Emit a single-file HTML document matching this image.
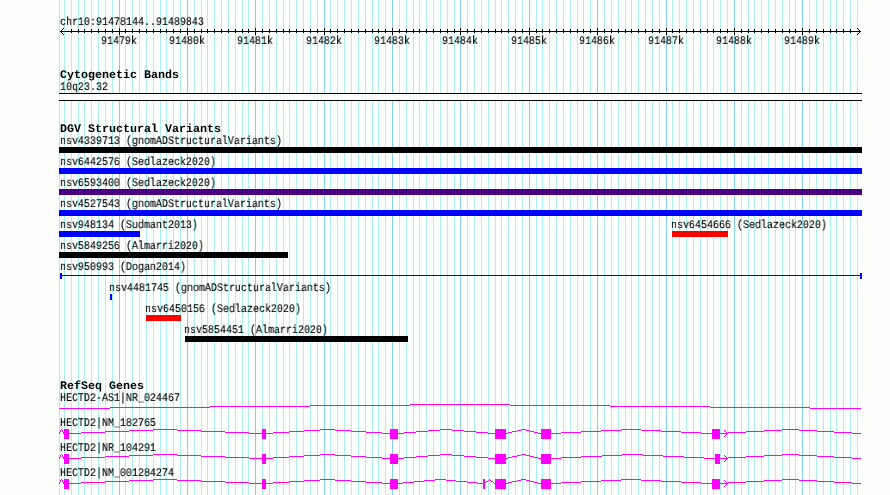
<!DOCTYPE html><html><head><meta charset="utf-8"><style>
html,body{margin:0;padding:0;}
body{width:890px;height:495px;overflow:hidden;background:#fcfefc;position:relative;}
svg{position:absolute;left:0;top:0;}
.t{position:absolute;white-space:pre;font-family:"Liberation Mono",monospace;color:#000;transform-origin:0 0;line-height:1;text-rendering:geometricPrecision;will-change:transform;}
.s{font-size:11.6px;transform:scaleX(0.8620);font-weight:normal;-webkit-text-stroke:0.12px #000;}
.b{font-size:11.6px;transform:scaleX(1.0060);font-weight:bold;}
</style></head><body>
<svg width="890" height="495" viewBox="0 0 890 495" shape-rendering="crispEdges">
<path fill="#afeeee" d="M59 0h1v495h-1zM64 0h1v495h-1zM71 0h1v495h-1zM78 0h1v495h-1zM84 0h1v495h-1zM91 0h1v495h-1zM98 0h1v495h-1zM105 0h1v495h-1zM112 0h1v495h-1z"/>
<path fill="#87ceeb" d="M119 0h1v495h-1z"/>
<path fill="#afeeee" d="M125 0h1v495h-1zM132 0h1v495h-1zM139 0h1v495h-1zM146 0h1v495h-1zM153 0h1v495h-1zM160 0h1v495h-1zM166 0h1v495h-1zM173 0h1v495h-1zM180 0h1v495h-1z"/>
<path fill="#87ceeb" d="M187 0h1v495h-1z"/>
<path fill="#afeeee" d="M194 0h1v495h-1zM201 0h1v495h-1zM207 0h1v495h-1zM214 0h1v495h-1zM221 0h1v495h-1zM228 0h1v495h-1zM235 0h1v495h-1zM242 0h1v495h-1zM248 0h1v495h-1z"/>
<path fill="#87ceeb" d="M255 0h1v495h-1z"/>
<path fill="#afeeee" d="M262 0h1v495h-1zM269 0h1v495h-1zM276 0h1v495h-1zM283 0h1v495h-1zM289 0h1v495h-1zM296 0h1v495h-1zM303 0h1v495h-1zM310 0h1v495h-1zM317 0h1v495h-1z"/>
<path fill="#87ceeb" d="M324 0h1v495h-1z"/>
<path fill="#afeeee" d="M330 0h1v495h-1zM337 0h1v495h-1zM344 0h1v495h-1zM351 0h1v495h-1zM358 0h1v495h-1zM365 0h1v495h-1zM372 0h1v495h-1zM378 0h1v495h-1zM385 0h1v495h-1z"/>
<path fill="#87ceeb" d="M392 0h1v495h-1z"/>
<path fill="#afeeee" d="M399 0h1v495h-1zM406 0h1v495h-1zM413 0h1v495h-1zM419 0h1v495h-1zM426 0h1v495h-1zM433 0h1v495h-1zM440 0h1v495h-1zM447 0h1v495h-1zM454 0h1v495h-1z"/>
<path fill="#87ceeb" d="M460 0h1v495h-1z"/>
<path fill="#afeeee" d="M467 0h1v495h-1zM474 0h1v495h-1zM481 0h1v495h-1zM488 0h1v495h-1zM495 0h1v495h-1zM501 0h1v495h-1zM508 0h1v495h-1zM515 0h1v495h-1zM522 0h1v495h-1z"/>
<path fill="#87ceeb" d="M529 0h1v495h-1z"/>
<path fill="#afeeee" d="M536 0h1v495h-1zM542 0h1v495h-1zM549 0h1v495h-1zM556 0h1v495h-1zM563 0h1v495h-1zM570 0h1v495h-1zM577 0h1v495h-1zM583 0h1v495h-1zM590 0h1v495h-1z"/>
<path fill="#87ceeb" d="M597 0h1v495h-1z"/>
<path fill="#afeeee" d="M604 0h1v495h-1zM611 0h1v495h-1zM618 0h1v495h-1zM625 0h1v495h-1zM631 0h1v495h-1zM638 0h1v495h-1zM645 0h1v495h-1zM652 0h1v495h-1zM659 0h1v495h-1z"/>
<path fill="#87ceeb" d="M666 0h1v495h-1z"/>
<path fill="#afeeee" d="M672 0h1v495h-1zM679 0h1v495h-1zM686 0h1v495h-1zM693 0h1v495h-1zM700 0h1v495h-1zM707 0h1v495h-1zM713 0h1v495h-1zM720 0h1v495h-1zM727 0h1v495h-1z"/>
<path fill="#87ceeb" d="M734 0h1v495h-1z"/>
<path fill="#afeeee" d="M741 0h1v495h-1zM748 0h1v495h-1zM754 0h1v495h-1zM761 0h1v495h-1zM768 0h1v495h-1zM775 0h1v495h-1zM782 0h1v495h-1zM789 0h1v495h-1zM795 0h1v495h-1z"/>
<path fill="#87ceeb" d="M802 0h1v495h-1z"/>
<path fill="#afeeee" d="M809 0h1v495h-1zM816 0h1v495h-1zM823 0h1v495h-1zM830 0h1v495h-1zM836 0h1v495h-1zM843 0h1v495h-1zM850 0h1v495h-1zM857 0h1v495h-1z"/>
<path fill="#fcfefc" d="M59 94h803v6h-803z"/>
<path fill="#000" d="M60 31h801v1h-801zM71 29h1v4h-1zM78 29h1v4h-1zM84 29h1v4h-1zM91 29h1v4h-1zM98 29h1v4h-1zM105 29h1v4h-1zM112 29h1v4h-1zM119 28h1v7h-1zM125 29h1v4h-1zM132 29h1v4h-1zM139 29h1v4h-1zM146 29h1v4h-1zM153 29h1v4h-1zM160 29h1v4h-1zM166 29h1v4h-1zM173 29h1v4h-1zM180 29h1v4h-1zM187 28h1v7h-1zM194 29h1v4h-1zM201 29h1v4h-1zM207 29h1v4h-1zM214 29h1v4h-1zM221 29h1v4h-1zM228 29h1v4h-1zM235 29h1v4h-1zM242 29h1v4h-1zM248 29h1v4h-1zM255 28h1v7h-1zM262 29h1v4h-1zM269 29h1v4h-1zM276 29h1v4h-1zM283 29h1v4h-1zM289 29h1v4h-1zM296 29h1v4h-1zM303 29h1v4h-1zM310 29h1v4h-1zM317 29h1v4h-1zM324 28h1v7h-1zM330 29h1v4h-1zM337 29h1v4h-1zM344 29h1v4h-1zM351 29h1v4h-1zM358 29h1v4h-1zM365 29h1v4h-1zM372 29h1v4h-1zM378 29h1v4h-1zM385 29h1v4h-1zM392 28h1v7h-1zM399 29h1v4h-1zM406 29h1v4h-1zM413 29h1v4h-1zM419 29h1v4h-1zM426 29h1v4h-1zM433 29h1v4h-1zM440 29h1v4h-1zM447 29h1v4h-1zM454 29h1v4h-1zM460 28h1v7h-1zM467 29h1v4h-1zM474 29h1v4h-1zM481 29h1v4h-1zM488 29h1v4h-1zM495 29h1v4h-1zM501 29h1v4h-1zM508 29h1v4h-1zM515 29h1v4h-1zM522 29h1v4h-1zM529 28h1v7h-1zM536 29h1v4h-1zM542 29h1v4h-1zM549 29h1v4h-1zM556 29h1v4h-1zM563 29h1v4h-1zM570 29h1v4h-1zM577 29h1v4h-1zM583 29h1v4h-1zM590 29h1v4h-1zM597 28h1v7h-1zM604 29h1v4h-1zM611 29h1v4h-1zM618 29h1v4h-1zM625 29h1v4h-1zM631 29h1v4h-1zM638 29h1v4h-1zM645 29h1v4h-1zM652 29h1v4h-1zM659 29h1v4h-1zM666 28h1v7h-1zM672 29h1v4h-1zM679 29h1v4h-1zM686 29h1v4h-1zM693 29h1v4h-1zM700 29h1v4h-1zM707 29h1v4h-1zM713 29h1v4h-1zM720 29h1v4h-1zM727 29h1v4h-1zM734 28h1v7h-1zM741 29h1v4h-1zM748 29h1v4h-1zM754 29h1v4h-1zM761 29h1v4h-1zM768 29h1v4h-1zM775 29h1v4h-1zM782 29h1v4h-1zM789 29h1v4h-1zM795 29h1v4h-1zM802 28h1v7h-1zM809 29h1v4h-1zM816 29h1v4h-1zM823 29h1v4h-1zM830 29h1v4h-1zM836 29h1v4h-1zM843 29h1v4h-1zM850 29h1v4h-1zM61 30h1v1h-1zM61 32h1v1h-1zM859 30h1v1h-1zM859 32h1v1h-1zM62 29h1v1h-1zM62 33h1v1h-1zM858 29h1v1h-1zM858 33h1v1h-1zM63 28h1v1h-1zM63 34h1v1h-1zM857 28h1v1h-1zM857 34h1v1h-1zM59 93h803v1h-803zM59 100h803v1h-803z"/>
<path fill="#000000" d="M59 147h803v6h-803z"/>
<path fill="#0000ff" d="M59 168h803v6h-803z"/>
<path fill="#4b0082" d="M59 189h803v6h-803z"/>
<path fill="#0000ff" d="M59 210h803v6h-803zM59 231h81v6h-81z"/>
<path fill="#ff0000" d="M672 231h56v6h-56z"/>
<path fill="#000000" d="M59 252h229v6h-229z"/>
<path fill="#0000ff" d="M62 275h798v1h-798zM60 273h2v6h-2zM860 273h2v6h-2zM110 294h2v6h-2z"/>
<path fill="#ff0000" d="M146 315h35v6h-35z"/>
<path fill="#000000" d="M185 336h223v6h-223z"/>
<path fill="#ff00ff" d="M410 404h51v1h-51zM310 405h100v1h-100zM210 406h100v1h-100zM110 407h100v1h-100zM59 408h51v1h-51zM460 404h50v1h-50zM510 405h100v1h-100zM610 406h100v1h-100zM710 407h100v1h-100zM810 408h51v1h-51zM61 429h1v1h-1zM60 430h1v1h-1zM60 431h1v1h-1zM59 432h1v1h-1zM59 433h1v1h-1zM61 429h1v1h-1zM62 430h1v1h-1zM62 431h1v1h-1zM63 432h1v1h-1zM63 433h1v1h-1zM153 429h13v1h-13zM129 430h24v1h-24zM105 431h24v1h-24zM81 432h24v1h-24zM68 433h13v1h-13zM165 429h12v1h-12zM177 430h24v1h-24zM201 431h24v1h-24zM225 432h24v1h-24zM249 433h13v1h-13zM320 429h8v1h-8zM304 430h16v1h-16zM289 431h15v1h-15zM273 432h16v1h-16zM265 433h8v1h-8zM327 429h8v1h-8zM335 430h16v1h-16zM351 431h15v1h-15zM366 432h16v1h-16zM382 433h8v1h-8zM440 429h7v1h-7zM428 430h12v1h-12zM416 431h12v1h-12zM404 432h12v1h-12zM397 433h7v1h-7zM446 429h6v1h-6zM452 430h12v1h-12zM464 431h12v1h-12zM476 432h12v1h-12zM488 433h7v1h-7zM521 429h3v1h-3zM517 430h4v1h-4zM512 431h5v1h-5zM508 432h4v1h-4zM505 433h3v1h-3zM523 429h3v1h-3zM526 430h4v1h-4zM530 431h4v1h-4zM534 432h4v1h-4zM538 433h3v1h-3zM621 429h11v1h-11zM601 430h20v1h-20zM581 431h20v1h-20zM561 432h20v1h-20zM550 433h11v1h-11zM631 429h10v1h-10zM641 430h20v1h-20zM661 431h20v1h-20zM681 432h20v1h-20zM701 433h11v1h-11zM782 429h9v1h-9zM764 430h18v1h-18zM746 431h18v1h-18zM728 432h18v1h-18zM719 433h9v1h-9zM790 429h9v1h-9zM799 430h18v1h-18zM817 431h17v1h-17zM834 432h18v1h-18zM852 433h9v1h-9zM64 429h5v10h-5zM262 429h4v10h-4zM390 429h8v10h-8zM495 429h11v10h-11zM541 429h10v10h-10zM712 429h8v10h-8zM726 432h1v1h-1zM726 434h1v1h-1zM725 431h1v1h-1zM725 435h1v1h-1zM724 430h1v1h-1zM724 436h1v1h-1zM61 454h1v1h-1zM60 455h1v1h-1zM60 456h1v1h-1zM59 457h1v1h-1zM59 458h1v1h-1zM61 454h1v1h-1zM62 455h1v1h-1zM62 456h1v1h-1zM63 457h1v1h-1zM63 458h1v1h-1zM153 454h13v1h-13zM129 455h24v1h-24zM105 456h24v1h-24zM81 457h24v1h-24zM68 458h13v1h-13zM165 454h12v1h-12zM177 455h24v1h-24zM201 456h24v1h-24zM225 457h24v1h-24zM249 458h13v1h-13zM320 454h8v1h-8zM304 455h16v1h-16zM289 456h15v1h-15zM273 457h16v1h-16zM265 458h8v1h-8zM327 454h8v1h-8zM335 455h16v1h-16zM351 456h15v1h-15zM366 457h16v1h-16zM382 458h8v1h-8zM440 454h7v1h-7zM428 455h12v1h-12zM416 456h12v1h-12zM404 457h12v1h-12zM397 458h7v1h-7zM446 454h6v1h-6zM452 455h12v1h-12zM464 456h12v1h-12zM476 457h12v1h-12zM488 458h7v1h-7zM521 454h3v1h-3zM517 455h4v1h-4zM512 456h5v1h-5zM508 457h4v1h-4zM505 458h3v1h-3zM523 454h3v1h-3zM526 455h4v1h-4zM530 456h4v1h-4zM534 457h4v1h-4zM538 458h3v1h-3zM622 454h11v1h-11zM602 455h20v1h-20zM581 456h21v1h-21zM561 457h20v1h-20zM550 458h11v1h-11zM632 454h11v1h-11zM643 455h20v1h-20zM663 456h21v1h-21zM684 457h20v1h-20zM704 458h11v1h-11zM782 454h9v1h-9zM764 455h18v1h-18zM746 456h18v1h-18zM728 457h18v1h-18zM719 458h9v1h-9zM790 454h9v1h-9zM799 455h18v1h-18zM817 456h17v1h-17zM834 457h18v1h-18zM852 458h9v1h-9zM64 454h5v10h-5zM262 454h4v10h-4zM390 454h8v10h-8zM495 454h11v10h-11zM541 454h10v10h-10zM715 454h5v10h-5zM726 457h1v1h-1zM726 459h1v1h-1zM725 456h1v1h-1zM725 460h1v1h-1zM724 455h1v1h-1zM724 461h1v1h-1zM61 479h1v1h-1zM60 480h1v1h-1zM60 481h1v1h-1zM59 482h1v1h-1zM59 483h1v1h-1zM61 479h1v1h-1zM62 480h1v1h-1zM62 481h1v1h-1zM63 482h1v1h-1zM63 483h1v1h-1zM153 479h13v1h-13zM129 480h24v1h-24zM105 481h24v1h-24zM81 482h24v1h-24zM68 483h13v1h-13zM165 479h12v1h-12zM177 480h24v1h-24zM201 481h24v1h-24zM225 482h24v1h-24zM249 483h13v1h-13zM320 479h8v1h-8zM304 480h16v1h-16zM289 481h15v1h-15zM273 482h16v1h-16zM265 483h8v1h-8zM327 479h8v1h-8zM335 480h16v1h-16zM351 481h15v1h-15zM366 482h16v1h-16zM382 483h8v1h-8zM435 479h6v1h-6zM424 480h11v1h-11zM414 481h10v1h-10zM403 482h11v1h-11zM397 483h6v1h-6zM440 479h6v1h-6zM446 480h10v1h-10zM456 481h11v1h-11zM467 482h10v1h-10zM477 483h6v1h-6zM489 479h1v1h-1zM488 480h1v1h-1zM486 481h2v1h-2zM485 482h1v1h-1zM484 483h1v1h-1zM489 479h1v1h-1zM490 480h1v1h-1zM491 481h2v1h-2zM493 482h1v1h-1zM494 483h1v1h-1zM521 479h3v1h-3zM517 480h4v1h-4zM512 481h5v1h-5zM508 482h4v1h-4zM505 483h3v1h-3zM523 479h3v1h-3zM526 480h4v1h-4zM530 481h4v1h-4zM534 482h4v1h-4zM538 483h3v1h-3zM621 479h11v1h-11zM601 480h20v1h-20zM581 481h20v1h-20zM561 482h20v1h-20zM550 483h11v1h-11zM631 479h10v1h-10zM641 480h20v1h-20zM661 481h20v1h-20zM681 482h20v1h-20zM701 483h11v1h-11zM782 479h9v1h-9zM764 480h18v1h-18zM746 481h18v1h-18zM728 482h18v1h-18zM719 483h9v1h-9zM790 479h9v1h-9zM799 480h18v1h-18zM817 481h17v1h-17zM834 482h18v1h-18zM852 483h9v1h-9zM64 479h5v10h-5zM262 479h4v10h-4zM390 479h8v10h-8zM483 479h2v10h-2zM495 479h11v10h-11zM541 479h10v10h-10zM712 479h8v10h-8zM726 482h1v1h-1zM726 484h1v1h-1zM725 481h1v1h-1zM725 485h1v1h-1zM724 480h1v1h-1zM724 486h1v1h-1z"/>
</svg>
<div class="t s" style="left:60px;top:17.1px">chr10:91478144..91489843</div>
<div class="t s" style="left:101px;top:36.1px">91479k</div>
<div class="t s" style="left:169px;top:36.1px">91480k</div>
<div class="t s" style="left:237px;top:36.1px">91481k</div>
<div class="t s" style="left:306px;top:36.1px">91482k</div>
<div class="t s" style="left:374px;top:36.1px">91483k</div>
<div class="t s" style="left:442px;top:36.1px">91484k</div>
<div class="t s" style="left:511px;top:36.1px">91485k</div>
<div class="t s" style="left:579px;top:36.1px">91486k</div>
<div class="t s" style="left:648px;top:36.1px">91487k</div>
<div class="t s" style="left:716px;top:36.1px">91488k</div>
<div class="t s" style="left:784px;top:36.1px">91489k</div>
<div class="t b" style="left:60px;top:70.1px">Cytogenetic Bands</div>
<div class="t s" style="left:60px;top:82.1px">10q23.32</div>
<div class="t b" style="left:60px;top:124.1px">DGV Structural Variants</div>
<div class="t s" style="left:60px;top:136.1px">nsv4339713 (gnomADStructuralVariants)</div>
<div class="t s" style="left:60px;top:157.1px">nsv6442576 (Sedlazeck2020)</div>
<div class="t s" style="left:60px;top:178.1px">nsv6593400 (Sedlazeck2020)</div>
<div class="t s" style="left:60px;top:199.1px">nsv4527543 (gnomADStructuralVariants)</div>
<div class="t s" style="left:60px;top:220.1px">nsv948134 (Sudmant2013)</div>
<div class="t s" style="left:60px;top:241.1px">nsv5849256 (Almarri2020)</div>
<div class="t s" style="left:60px;top:262.1px">nsv950993 (Dogan2014)</div>
<div class="t s" style="left:109px;top:283.1px">nsv4481745 (gnomADStructuralVariants)</div>
<div class="t s" style="left:145px;top:304.1px">nsv6450156 (Sedlazeck2020)</div>
<div class="t s" style="left:184px;top:325.1px">nsv5854451 (Almarri2020)</div>
<div class="t s" style="left:671px;top:220.1px">nsv6454666 (Sedlazeck2020)</div>
<div class="t b" style="left:60px;top:381.1px">RefSeq Genes</div>
<div class="t s" style="left:60px;top:393.1px">HECTD2-AS1|NR_024467</div>
<div class="t s" style="left:60px;top:418.1px">HECTD2|NM_182765</div>
<div class="t s" style="left:60px;top:443.1px">HECTD2|NR_104291</div>
<div class="t s" style="left:60px;top:468.1px">HECTD2|NM_001284274</div>
</body></html>
